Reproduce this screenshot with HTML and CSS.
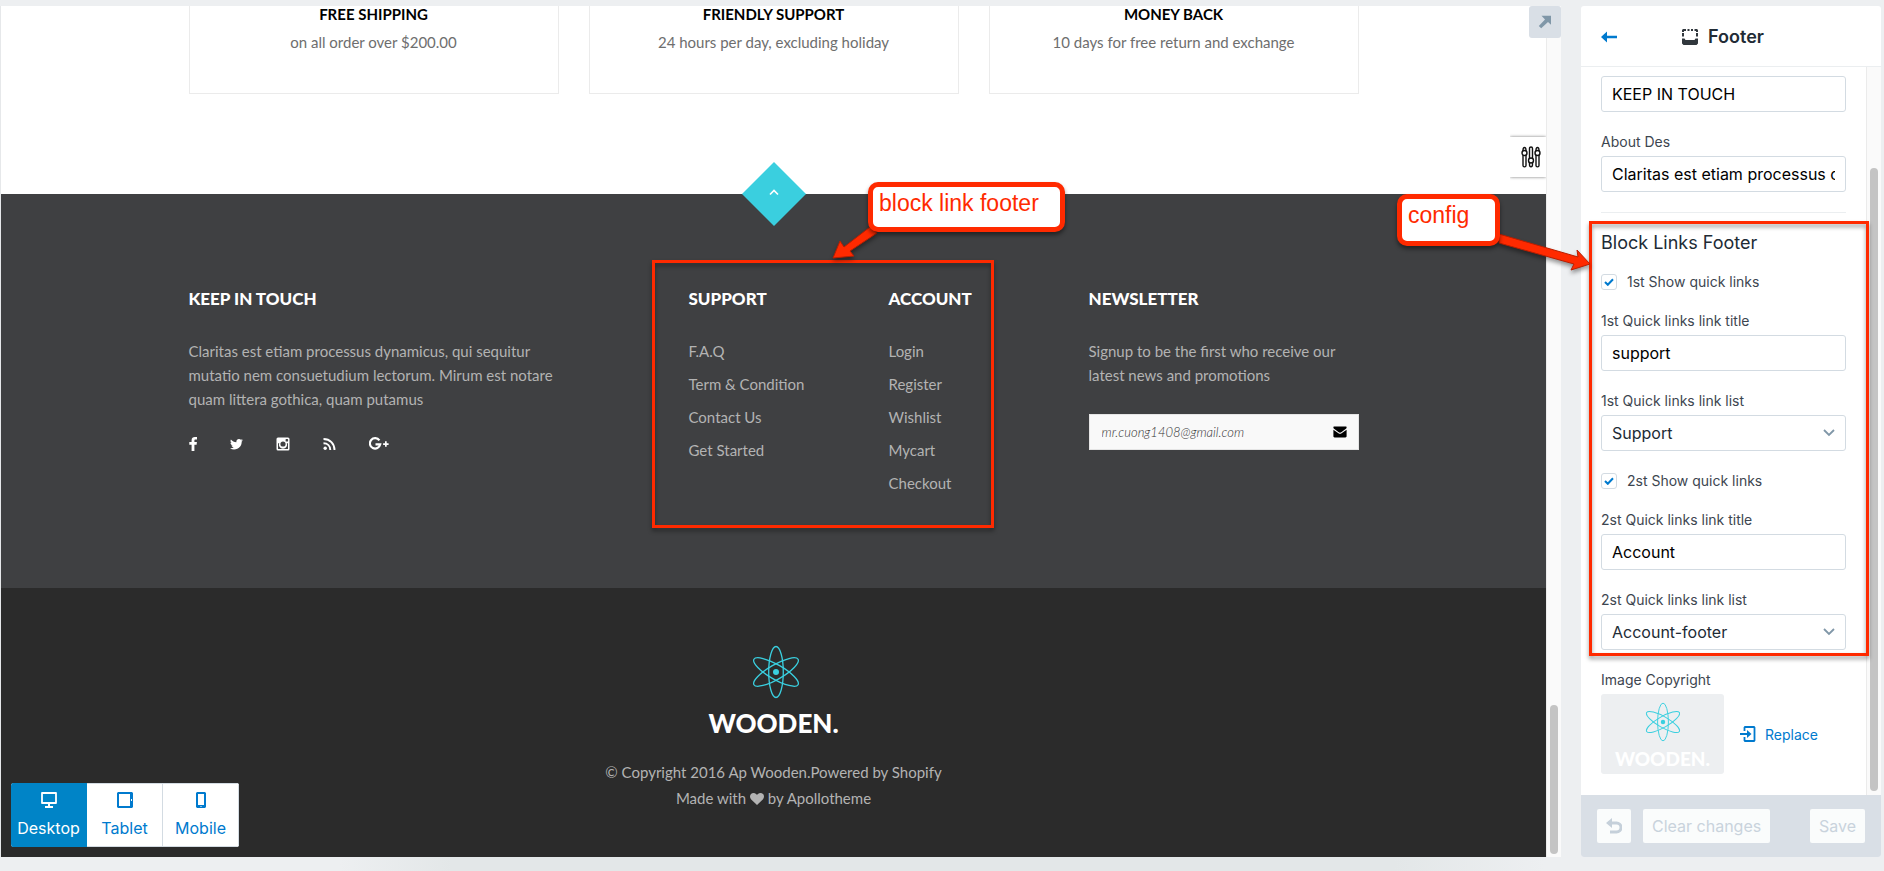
FILE: index.html
```html
<!DOCTYPE html>
<html lang="en">
<head>
<meta charset="utf-8">
<title>Theme editor - Footer</title>
<link rel="stylesheet" href="styles.css">
</head>
<body>
<svg class="defs" aria-hidden="true">
  <symbol id="atom" viewBox="0 0 48 54">
    <g fill="none" stroke="#3acfdf" stroke-width="1.3">
      <ellipse cx="24" cy="27" rx="7.3" ry="25.5"/>
      <ellipse cx="24" cy="27" rx="7.3" ry="25.5" transform="rotate(60 24 27)"/>
      <ellipse cx="24" cy="27" rx="7.3" ry="25.5" transform="rotate(-60 24 27)"/>
    </g>
    <circle cx="24" cy="27" r="3" fill="#3acfdf"/>
  </symbol>
</svg>
<div class="stage">
  <main class="preview">
    <div class="shop">
      <section class="services">
        <div class="container service-grid">
          <article class="service"><h3>FREE SHIPPING</h3><p>on all order over $200.00</p></article>
          <article class="service"><h3>FRIENDLY SUPPORT</h3><p>24 hours per day, excluding holiday</p></article>
          <article class="service"><h3>MONEY BACK</h3><p>10 days for free return and exchange</p></article>
        </div>
      </section>
      <footer class="shop-footer">
        <div class="footer-main">
          <a class="to-top" href="#" aria-label="Back to top">
            <svg viewBox="0 0 64 64" width="64" height="64"><path d="M32 0 64 32 32 64 0 32z" fill="#3acfdf"/><path d="M28 32.500 32 28.500l4 4" fill="none" stroke="#fff" stroke-width="1.700"/></svg>
          </a>
          <div class="container footer-grid">
            <section class="about">
              <h4>KEEP IN TOUCH</h4>
              <p>Claritas est etiam processus dynamicus, qui sequitur<br>mutatio nem consuetudium lectorum. Mirum est notare<br>quam littera gothica, quam putamus</p>
              <div class="social">
                <a href="#" aria-label="Facebook"><svg width="8" height="14" viewBox="0 0 8 14"><path d="M8 .1v2.300H6.600C5.600 2.400 5.400 2.900 5.400 3.600v1.500H7.900L7.600 7.700H5.400V14H2.600V7.700H.3V5.100h2.300V3.200C2.600 1.100 3.900 0 5.900 0 6.800 0 7.700.1 8 .1z"/></svg></a>
                <a href="#" aria-label="Twitter"><svg width="13" height="14" viewBox="0 0 13 14"><path d="M13 3.300c-.4.500-.8 1-1.300 1.300v.4c0 3.500-2.700 7.500-7.600 7.500-1.500 0-2.900-.4-4.100-1.200 1.400.2 2.800-.2 3.900-1.100-1.200 0-2.100-.8-2.500-1.800.4.100.8.100 1.200-.1C1.400 8.100.5 7 .5 5.700c.4.200.8.300 1.200.3C.6 5.200.1 3.700.9 2.400c1.300 1.600 3.300 2.700 5.500 2.800C6 3.300 7.300 1.900 9 1.900c.8 0 1.500.3 1.900.8.600-.1 1.200-.3 1.700-.6-.2.600-.6 1.100-1.200 1.500.6-.1 1.100-.2 1.600-.3z"/></svg></a>
                <a href="#" aria-label="Instagram"><svg width="14" height="14" viewBox="0 0 14 14"><path fill-rule="evenodd" d="M2 .5h10a1.500 1.500 0 0 1 1.500 1.500v10a1.500 1.500 0 0 1-1.500 1.500H2A1.500 1.500 0 0 1 .5 12V2A1.500 1.500 0 0 1 2 .5zM2 6.200v5.200c0 .3.200.6.600.6h8.900c.3 0 .5-.3.500-.6V6.200h-1.200A4.100 4.100 0 1 1 3.200 6.200zM10.200 2c-.3 0-.6.200-.6.500v1.400c0 .3.300.6.600.6h1.300c.3 0 .6-.3.600-.6V2.500c0-.3-.3-.5-.6-.5zM7 4.400a2.600 2.600 0 1 0 0 5.200 2.600 2.600 0 0 0 0-5.200z"/></svg></a>
                <a href="#" aria-label="RSS"><svg width="13" height="14" viewBox="0 0 13 14"><circle cx="2.200" cy="11.300" r="1.700"/><path d="M.5 6.200c4 0 6.800 2.800 6.800 6.800M.5 2c6.500 0 11 4.500 11 11" fill="none" stroke="#fff" stroke-width="1.900"/></svg></a>
                <a href="#" aria-label="Google Plus"><svg width="20" height="14" viewBox="0 0 20 14"><path d="M10.400 3.400A5.200 5.200 0 1 0 11.200 7.400H6.500" fill="none" stroke="#fff" stroke-width="2.200"/><path d="M16 4.300h1.700v1.900h1.900v1.700h-1.900v1.900H16V7.900h-1.900V6.200H16z"/></svg></a>
              </div>
            </section>
            <nav class="links" aria-label="Support">
              <h4>SUPPORT</h4>
              <ul><li><a href="#">F.A.Q</a></li><li><a href="#">Term &amp; Condition</a></li><li><a href="#">Contact Us</a></li><li><a href="#">Get Started</a></li></ul>
            </nav>
            <nav class="links" aria-label="Account">
              <h4>ACCOUNT</h4>
              <ul><li><a href="#">Login</a></li><li><a href="#">Register</a></li><li><a href="#">Wishlist</a></li><li><a href="#">Mycart</a></li><li><a href="#">Checkout</a></li></ul>
            </nav>
            <section class="newsletter">
              <h4>NEWSLETTER</h4>
              <p>Signup to be the first who receive our<br>latest news and promotions</p>
              <form class="signup">
                <input type="email" aria-label="Email address" placeholder="mr.cuong1408@gmail.com">
                <button type="button" aria-label="Subscribe"><svg width="14" height="12" viewBox="0 0 14 12"><path d="M1.300.5h11.400c.7 0 1 .5.900 1.200-.1.600-.5 1-1 1.400L8.300 6.200c-.8.600-1.800.6-2.600 0L1.400 3.100C.9 2.700.5 2.300.4 1.700.3 1 .6.500 1.300.5z"/><path d="M.4 3.700 5.400 7.300c1 .7 2.200.7 3.200 0l5-3.600v6.600c0 .7-.5 1.200-1.200 1.200H1.600c-.7 0-1.200-.5-1.200-1.200z"/></svg></button>
              </form>
            </section>
          </div>
        </div>
        <div class="footer-bottom">
          <svg class="atom" width="48" height="54"><use href="#atom"/></svg>
          <div class="brand">WOODEN.</div>
          <p>© Copyright 2016 Ap Wooden.Powered by Shopify<br>Made with <svg width="14" height="12" viewBox="0 0 14 12"><path fill="#b3b3b3" d="M7 12 1.200 6.400C-1.200 4 .2 0 3.700 0 5.300 0 6.400 1.100 7 1.900 7.600 1.100 8.700 0 10.300 0c3.500 0 4.900 4 2.500 6.400z"/></svg> by Apollotheme</p>
        </div>
      </footer>
    </div>
    <div class="track preview-track"><div class="thumb preview-thumb"></div></div>
    <button class="expand" type="button" aria-label="Open preview">
      <svg width="14" height="14" viewBox="0 0 14 14"><path d="M3.500.8 13 .8V9.800L10 6.900 3.200 13.300.8 11 7 4.500z" fill="#8097a8"/></svg>
    </button>
    <button class="tuner" type="button" aria-label="Theme options">
      <svg width="20" height="22" viewBox="0 0 20 22" fill="#fff" stroke="#111" stroke-width="1.400"><path d="M2 4.500c0-4 3-4 3 0v15c0 1.800-3 1.800-3 0zM8.500 2.500c0-2 3-2 3 0v16c0 3-3 3-3 0zM15 4.500c0-4 3-4 3 0v15c0 1.800-3 1.800-3 0z"/><circle cx="3.500" cy="7" r="2.500"/><circle cx="10" cy="14.500" r="2.500"/><circle cx="16.500" cy="7" r="2.500"/></svg>
    </button>
    <div class="devices">
      <button class="active" type="button"><svg width="16" height="16" viewBox="0 0 16 16"><path d="M1 1h14v10H1z" fill="none" stroke="currentColor" stroke-width="1.800" stroke-linejoin="round"/><path d="M7 11h2v3h3v2H4v-2h3z" fill="currentColor"/></svg><span>Desktop</span></button>
      <button type="button"><svg width="16" height="16" viewBox="0 0 16 16"><path fill="currentColor" fill-rule="evenodd" d="M1 0h14l1 1v14l-1 1H1l-1-1V1zM2 2v12h11V2zM14 7v2h1V7z"/></svg><span>Tablet</span></button>
      <button type="button"><svg width="16" height="16" viewBox="0 0 16 16"><path fill="currentColor" fill-rule="evenodd" d="M4 0h8l1 1v14l-1 1H4l-1-1V1zM5 2v11h6V2zM7.500 14v1h1v-1z"/></svg><span>Mobile</span></button>
    </div>
  </main>

  <aside class="sidebar">
    <header class="side-head">
      <a href="#" aria-label="Back"><svg width="16" height="12" viewBox="0 0 16 12"><path d="M6 .5V4.800h10v2.400H6v4.300L0 6z" fill="#007ace"/></svg></a>
      <h1><svg width="16" height="16" viewBox="0 0 16 16"><path d="M0 9.500h2.500L3.500 11h9l1-1.500H16v5L14.500 16h-13L0 14.500zM0 4h2v3.500H0zM14 4h2v3.500h-2zM1 0h3v2H2v1H0V1zM5.500 0h2v2h-2zM9 0h2v2H9zM12.500 0H15l1 1v2h-2V2h-1.500z" fill="#31373d"/></svg>Footer</h1>
    </header>
    <div class="side-body">
      <form class="settings">
        <input class="box" type="text" aria-label="Title" value="KEEP IN TOUCH">
        <div class="field"><label for="about">About Des</label><input class="box" id="about" type="text" value="Claritas est etiam processus dynamicus, qui sequitur"></div>
        <hr>
        <h2>Block Links Footer</h2>
        <label class="check"><input type="checkbox" checked>1st Show quick links</label>
        <div class="field"><label for="t1">1st Quick links link title</label><input class="box" id="t1" type="text" value="support"></div>
        <div class="field"><label for="l1">1st Quick links link list</label><select class="box" id="l1"><option>Support</option></select></div>
        <label class="check"><input type="checkbox" checked>2st Show quick links</label>
        <div class="field"><label for="t2">2st Quick links link title</label><input class="box" id="t2" type="text" value="Account"></div>
        <div class="field"><label for="l2">2st Quick links link list</label><select class="box" id="l2"><option>Account-footer</option></select></div>
        <div class="field"><span class="caption">Image Copyright</span>
          <div class="image-row">
            <div class="thumbnail"><svg width="36" height="40"><use href="#atom"/></svg><span>WOODEN.</span></div>
            <a class="replace" href="#"><svg width="16" height="16" viewBox="0 0 16 16"><path d="M4.500 5V1.500L5 1h9l.5.500v13l-.5.500H5l-.500-.500V11" fill="none" stroke="#007ace" stroke-width="1.800"/><path d="M0 7h7V4l4.500 4L7 12V9H0z" fill="#007ace"/></svg>Replace</a>
          </div>
        </div>
      </form>
      <div class="track side-track"><div class="thumb side-thumb"></div></div>
    </div>
    <footer class="side-foot">
      <button class="undo" type="button" disabled aria-label="Undo"><svg width="16" height="16" viewBox="0 0 16 16"><path d="M6 0v3.500h4.500a5.800 5.800 0 0 1 0 12H4v-3h6.500a2.900 2.900 0 0 0 0-6H6V10L0 5z" fill="#c5d0da"/></svg></button>
      <button type="button" disabled>Clear changes</button>
      <button class="save" type="button" disabled>Save</button>
    </footer>
  </aside>

  <div class="note outline links-outline"></div>
  <svg class="note arrow arrow-links" width="48" height="34" viewBox="0 0 48 34"><path d="M39 2 46 8 19 26l4 5L2 33 9 16l4 6z"/></svg>
  <div class="note callout links-callout">block link footer</div>
  <div class="note outline config-outline"></div>
  <svg class="note arrow arrow-config" width="94" height="42" viewBox="0 0 94 42"><path d="M2 4 81 27 80 20 93 34 74 40 77 34 2 13z"/></svg>
  <div class="note callout config-callout">config</div>
</div>
</body>
</html>
```
FILE: styles.css
```css
* { box-sizing: border-box; }
body, h1, h2, h3, h4, p, ul { margin: 0; padding: 0; }
body { font-family: Inter, "Noto Sans", sans-serif; color: #212b35; background: #edeff1; }
ul { list-style: none; }
a { text-decoration: none; color: inherit; }
svg { flex: none; }
button, input, select { font: inherit; margin: 0; }
.defs { position: absolute; width: 0; height: 0; }

.stage {
  position: relative;
  display: grid;
  grid-template-columns: minmax(0, 1fr) 300px;
  gap: 20px;
  min-height: 100vh;
  padding: 6px 3px 14px 1px;
  background: linear-gradient(90deg, #edeff1 18%, #e3e7e8 24%, #e3e7e8 74%, #edeff1 82%) bottom / 100% 14px no-repeat;
}

/* Shop preview */
.preview { position: relative; display: flex; background: #fff; box-shadow: -1px 0 #e6e8ea; }
.shop { flex: 1; min-width: 0; display: flex; flex-direction: column; font-family: Lato, sans-serif; font-size: 15px; }
.container { max-width: 1170px; margin: 0 auto; }
.services { padding-bottom: 100px; }
.service-grid { display: grid; grid-template-columns: repeat(3, 1fr); gap: 30px; }
.service { height: 88px; border: 1px solid #ebebeb; border-top: 0; text-align: center; }
.service h3 { font-size: 15px; line-height: 17px; color: #000; }
.service p { margin-top: 7px; line-height: 24px; color: #6e6e6e; }

.shop-footer { flex: 1; display: flex; flex-direction: column; color: #b3b3b3; }
.footer-main { position: relative; height: 394px; padding-top: 93px; background: #3f4042; }
.to-top { position: absolute; left: 50%; top: 0; transform: translate(-50%, -50%); }
.to-top svg { display: block; }
.footer-grid { display: grid; grid-template-columns: repeat(12, 1fr); column-gap: 30px; }
.about { grid-column: span 5; }
.links { grid-column: span 2; }
.newsletter { grid-column: span 3; }
.shop-footer h4 { font-size: 17px; font-weight: 900; line-height: 24px; color: #fff; margin-bottom: 28px; }
.about p, .newsletter p { line-height: 24px; white-space: nowrap; }
.links li { line-height: 24px; margin-bottom: 9px; white-space: nowrap; }
.social { display: flex; gap: 33px; margin-top: 26px; }
.social svg { display: block; fill: #fff; }
.signup { display: flex; align-items: center; height: 36px; margin-top: 27px; background: #f9f9f9; border: 1px solid #e5e5e5; }
.signup input { flex: 1; min-width: 0; border: 0; background: none; padding: 0 12px; font-size: 13px; font-style: italic; font-weight: 300; }
.signup input::placeholder { color: #333; opacity: 1; }
.signup button { border: 0; background: none; padding: 0 11px; }
.signup button svg { display: block; }

.footer-bottom { flex: 1; display: flex; flex-direction: column; align-items: center; padding-top: 57px; background: #2b2b2b; text-align: center; }
.atom { margin-left: 4px; }
.brand { margin-top: 8px; font-size: 26px; font-weight: 900; line-height: 32px; color: #fff; }
.footer-bottom p { margin-top: 20px; line-height: 26px; }
.footer-bottom p svg { vertical-align: -1px; }

.track { background: #fafafa; border-left: 1px solid #ebebeb; display: flex; flex-direction: column; align-items: center; }
.thumb { width: 8px; border-radius: 4px; background: #c4c4c4; }
.preview-track { width: 15px; justify-content: flex-end; padding-bottom: 3px; }
.preview-thumb { height: 149px; }

.expand { position: absolute; right: 0; top: 0; width: 32px; height: 32px; padding: 0; border: 0; border-radius: 3px; background: #d9dfe6; display: grid; place-items: center; }
.tuner { position: absolute; right: 15px; top: 131px; width: 36px; height: 40px; padding: 0 0 0 6px; border: 0; background: #fff; display: grid; place-items: center; clip-path: inset(-5px 0 -5px 0); box-shadow: 0 0 3px #777; }
.devices { position: absolute; left: 10px; bottom: 10px; display: flex; border-radius: 3px; overflow: hidden; background: #fff; }
.devices button { width: 76px; height: 64px; padding: 8px 0 0; border: 1px solid #d3dbe2; border-left: 0; background: #fff; color: #007ace; font-size: 16px; display: flex; flex-direction: column; align-items: center; gap: 9px; }
.devices span { line-height: 22px; }
.devices .active { background: #0084c7; border-color: #0084c7; color: #fff; }

/* Settings sidebar */
.sidebar { display: flex; flex-direction: column; background: #fff; border-radius: 3px; overflow: hidden; }
.side-head { display: grid; grid-template-columns: 16px 1fr 32px; align-items: center; height: 61px; padding: 2px 20px 0; border-bottom: 1px solid #ebeef0; }
.side-head a svg { display: block; }
.side-head h1 { display: flex; justify-content: center; align-items: center; gap: 10px; font-size: 18px; font-weight: 600; line-height: 24px; }
.side-body { flex: 1; display: flex; }
.settings { flex: 1; min-width: 0; padding: 9px 20px 20px; display: flex; flex-direction: column; gap: 20px; }
.box { display: block; width: 100%; height: 36px; padding: 0 10px; border: 1px solid #d3dbe2; border-radius: 3px; background: #fff; color: #000; font-size: 16px; }
select.box { appearance: none; color: #212b35; background: #fff url("data:image/svg+xml,%3Csvg xmlns='http://www.w3.org/2000/svg' width='12' height='8'%3E%3Cpath d='M1 1l5 5 5-5' fill='none' stroke='%238097a8' stroke-width='1.800'/%3E%3C/svg%3E") right 10px center no-repeat; }
.field label, .caption { display: block; margin-bottom: 4px; font-size: 14px; line-height: 20px; color: #3d4650; }
.settings hr { width: 100%; height: 1px; margin: 0; border: 0; background: #ebeef0; }
.settings h2 { font-size: 18px; font-weight: 400; line-height: 19px; }
.check { display: flex; align-items: center; gap: 10px; font-size: 14px; line-height: 19px; color: #3d4650; }
.check input { appearance: none; width: 16px; height: 16px; border: 1px solid #d3dbe2; border-radius: 3px; background: #fff url("data:image/svg+xml,%3Csvg xmlns='http://www.w3.org/2000/svg' width='10' height='8'%3E%3Cpath d='M1 4l2.800 2.800L9 1.200' fill='none' stroke='%23007ace' stroke-width='2'/%3E%3C/svg%3E") center no-repeat; }
.image-row { display: flex; align-items: center; gap: 16px; }
.thumbnail { display: flex; flex-direction: column; align-items: center; width: 123px; height: 80px; padding-top: 8px; border-radius: 3px; background: #edeff1; }
.thumbnail span { margin-top: 5px; font: 900 19px/24px Lato, sans-serif; color: #fff; }
.replace { display: flex; align-items: center; gap: 9px; font-size: 14px; color: #007ace; }
.side-track { width: 15px; justify-content: flex-end; padding-bottom: 4px; }
.side-thumb { height: 623px; }
.side-foot { display: flex; align-items: center; gap: 12px; height: 62px; padding: 0 16px; background: #d9dfe6; }
.side-foot button { height: 34px; padding: 0 9px; border: 0; border-radius: 2px; background: #fafcfc; color: #c9d3dc; font-size: 16px; white-space: nowrap; }
.side-foot .undo { width: 34px; }
.side-foot .undo svg { display: block; }
.side-foot .save { margin-left: auto; }

/* Annotations laid over the editor */
.note { position: absolute; }
.outline { border: 3px solid #ff2a00; filter: drop-shadow(0 3px 2px #0006); pointer-events: none; }
.links-outline { left: 652px; top: 260px; width: 342px; height: 268px; }
.config-outline { right: 15px; top: 221px; width: 280px; height: 435px; }
.callout { border: 5px solid #ff2a00; border-radius: 10px; background: #fff; color: #ff2a00; font: 23px/25px "Liberation Sans", Arial, sans-serif; box-shadow: 0 3px 4px #0007; white-space: nowrap; }
.links-callout { left: 868px; top: 182px; width: 197px; height: 50px; padding: 4px 6px; }
.config-callout { right: 384px; top: 194px; width: 103px; height: 52px; padding: 4px 6px; }
.arrow { fill: #ff2a00; stroke: #b81e00; stroke-width: 1; overflow: visible; filter: drop-shadow(0 3px 2px #0006); }
.arrow-links { left: 831px; top: 225px; }
.arrow-config { right: 293px; top: 230px; }
```
